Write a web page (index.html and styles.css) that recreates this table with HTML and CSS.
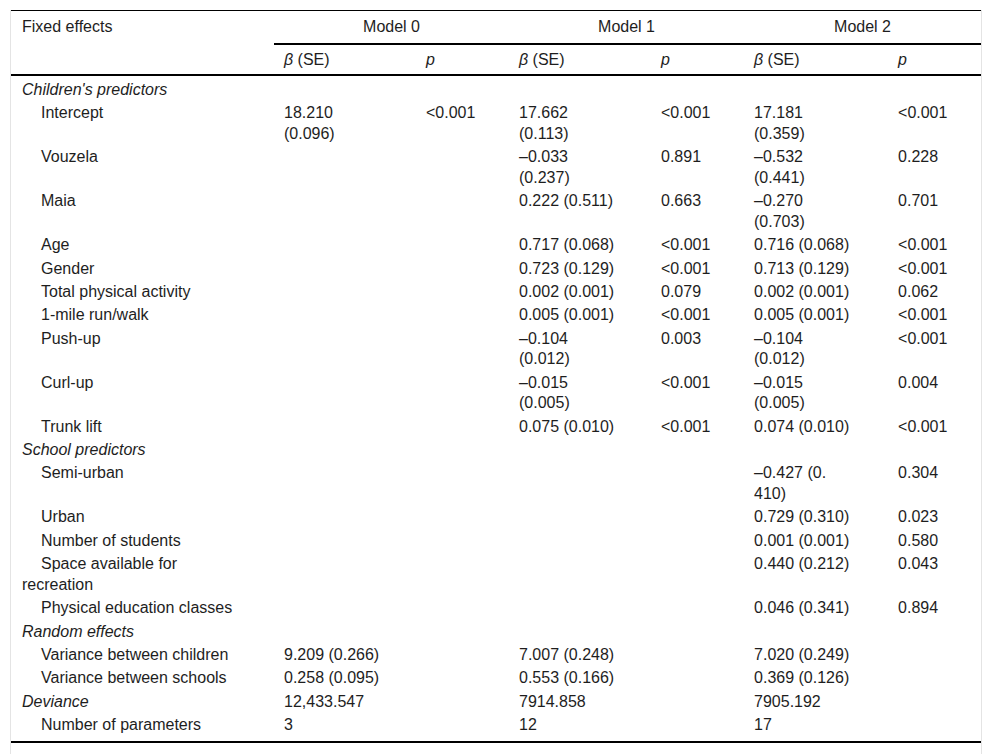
FILE: index.html
```html
<!DOCTYPE html>
<html>
<head>
<meta charset="utf-8">
<link rel="stylesheet" href="styles.css">
</head>
<body>
<div class="wrap">
<table class="tbl">
<colgroup>
<col class="c-label"><col class="c-b"><col class="c-p"><col class="c-b"><col class="c-p"><col class="c-b2"><col class="c-p">
</colgroup>
<thead>
<tr class="h1">
<th class="lbl" rowspan="2">Fixed effects</th>
<th class="model" colspan="2">Model 0</th>
<th class="model" colspan="2">Model 1</th>
<th class="model" colspan="2">Model 2</th>
</tr>
<tr class="h2">
<th><i>β</i> (SE)</th><th><i>p</i></th>
<th><i>β</i> (SE)</th><th><i>p</i></th>
<th><i>β</i> (SE)</th><th><i>p</i></th>
</tr>
</thead>
<tbody>
<tr class="sec first"><td><i>Children's predictors</i></td><td></td><td></td><td></td><td></td><td></td><td></td></tr>
<tr><td class="ind">Intercept</td><td>18.210 (0.096)</td><td>&lt;0.001</td><td>17.662 (0.113)</td><td>&lt;0.001</td><td>17.181 (0.359)</td><td>&lt;0.001</td></tr>
<tr><td class="ind">Vouzela</td><td></td><td></td><td>–0.033 (0.237)</td><td>0.891</td><td>–0.532 (0.441)</td><td>0.228</td></tr>
<tr><td class="ind">Maia</td><td></td><td></td><td>0.222 (0.511)</td><td>0.663</td><td>–0.270 (0.703)</td><td>0.701</td></tr>
<tr><td class="ind">Age</td><td></td><td></td><td>0.717 (0.068)</td><td>&lt;0.001</td><td>0.716 (0.068)</td><td>&lt;0.001</td></tr>
<tr><td class="ind">Gender</td><td></td><td></td><td>0.723 (0.129)</td><td>&lt;0.001</td><td>0.713 (0.129)</td><td>&lt;0.001</td></tr>
<tr><td class="ind">Total physical activity</td><td></td><td></td><td>0.002 (0.001)</td><td>0.079</td><td>0.002 (0.001)</td><td>0.062</td></tr>
<tr><td class="ind">1-mile run/walk</td><td></td><td></td><td>0.005 (0.001)</td><td>&lt;0.001</td><td>0.005 (0.001)</td><td>&lt;0.001</td></tr>
<tr><td class="ind">Push-up</td><td></td><td></td><td>–0.104 (0.012)</td><td>0.003</td><td>–0.104 (0.012)</td><td>&lt;0.001</td></tr>
<tr><td class="ind">Curl-up</td><td></td><td></td><td>–0.015 (0.005)</td><td>&lt;0.001</td><td>–0.015 (0.005)</td><td>0.004</td></tr>
<tr><td class="ind">Trunk lift</td><td></td><td></td><td>0.075 (0.010)</td><td>&lt;0.001</td><td>0.074 (0.010)</td><td>&lt;0.001</td></tr>
<tr class="sec"><td><i>School predictors</i></td><td></td><td></td><td></td><td></td><td></td><td></td></tr>
<tr><td class="ind">Semi-urban</td><td></td><td></td><td></td><td></td><td>–0.427 (0. 410)</td><td>0.304</td></tr>
<tr><td class="ind">Urban</td><td></td><td></td><td></td><td></td><td>0.729 (0.310)</td><td>0.023</td></tr>
<tr><td class="ind">Number of students</td><td></td><td></td><td></td><td></td><td>0.001 (0.001)</td><td>0.580</td></tr>
<tr><td class="ind">Space available for recreation</td><td></td><td></td><td></td><td></td><td>0.440 (0.212)</td><td>0.043</td></tr>
<tr><td class="ind">Physical education classes</td><td></td><td></td><td></td><td></td><td>0.046 (0.341)</td><td>0.894</td></tr>
<tr class="sec"><td><i>Random effects</i></td><td></td><td></td><td></td><td></td><td></td><td></td></tr>
<tr><td class="ind">Variance between children</td><td>9.209 (0.266)</td><td></td><td>7.007 (0.248)</td><td></td><td>7.020 (0.249)</td><td></td></tr>
<tr><td class="ind">Variance between schools</td><td>0.258 (0.095)</td><td></td><td>0.553 (0.166)</td><td></td><td>0.369 (0.126)</td><td></td></tr>
<tr class="sec"><td><i>Deviance</i></td><td>12,433.547</td><td></td><td>7914.858</td><td></td><td>7905.192</td><td></td></tr>
<tr class="last"><td class="ind">Number of parameters</td><td>3</td><td></td><td>12</td><td></td><td>17</td><td></td></tr>
</tbody>
</table>
</div>
</body>
</html>
```
FILE: styles.css
```css
html, body {
  margin: 0;
  padding: 0;
  background: #fff;
}
body {
  font-family: "Liberation Sans", Arial, sans-serif;
  font-size: 16px;
  color: #1e1e1e;
}
.wrap {
  margin: 10px 0 0 10px;
  width: 970px;
  min-height: 744px;
  border-left: 1px solid #e4e4e4;
  border-right: 1px solid #e4e4e4;
}
.tbl {
  width: 970px;
  table-layout: fixed;
  border-collapse: separate;
  border-spacing: 0;
  border-top: 1px solid #000;
  border-bottom: 2px solid #000;
}
.c-label { width: 263px; }
.c-b { width: 142px; }
.c-b2 { width: 144px; }
.c-p { width: 93px; }
.tbl th, .tbl td {
  text-align: left;
  vertical-align: top;
  font-weight: normal;
  line-height: 20.67px;
  padding: 1.35px 36px 1.35px 10px;
}
.tbl th.lbl, .tbl td:first-child {
  padding-left: 11px;
  padding-right: 32px;
}
.tbl td:nth-child(3), .tbl td:nth-child(5), .tbl td:nth-child(7) {
  padding-right: 6px;
}
.tbl thead th {
  line-height: 21px;
}
.h1 th {
  padding-top: 5px;
  padding-bottom: 6px;
}
.h1 th.model {
  text-align: center;
  padding-left: 0;
  padding-right: 0;
  border-bottom: 2px solid #000;
}
.h1 th.lbl {
  border-bottom: 2px solid #000;
}
.h2 th {
  padding-top: 4px;
  padding-bottom: 4px;
  border-bottom: 2px solid #000;
}
.tbl td.ind {
  text-indent: 19px;
}
.first td {
  padding-top: 3.7px;
}
.last td {
  padding-bottom: 5.7px;
}
```
